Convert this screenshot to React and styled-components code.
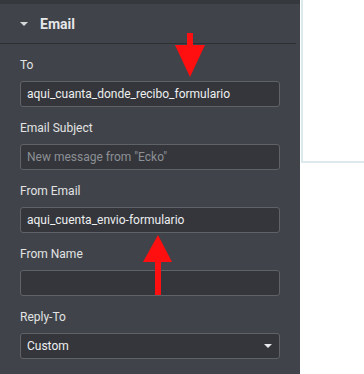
import React from 'react'
import styled, { createGlobalStyle } from 'styled-components'

const GlobalStyle = createGlobalStyle`
  html, body {
    margin: 0;
    padding: 0;
    background: #ffffff;
  }
  body {
    font-family: Roboto, "Liberation Sans", Arial, sans-serif;
  }
`

const Page = styled.div`
  display: flex;
  width: 364px;
  height: 374px;
  overflow: hidden;
`

const Panel = styled.div`
  position: relative;
  width: 300px;
  height: 100%;
  background: #404349;
  display: flex;
  flex-direction: column;
`

const TopStrip = styled.div`
  height: 4px;
  background: #35383d;
`

const SectionHeader = styled.div`
  height: 39px;
  display: flex;
  align-items: center;
  gap: 12px;
  padding-left: 20px;
  margin-right: 4px;
  border-bottom: 1px solid #2d2f33;
  color: #e6e7e9;
  font-size: 14px;
  font-weight: 700;
`

const Caret = styled.span`
  width: 0;
  height: 0;
  border-left: 4px solid transparent;
  border-right: 4px solid transparent;
  border-top: 4px solid #d8d9db;
  margin-top: 1px;
`

const Fields = styled.div`
  display: flex;
  flex-direction: column;
  padding: 13px 20px 0;
`

const Field = styled.div`
  display: flex;
  flex-direction: column;
  margin-bottom: 13px;
`

const Label = styled.div`
  height: 16px;
  line-height: 16px;
  font-size: 12px;
  color: #e2e3e5;
  margin-bottom: 8px;
`

const Input = styled.div`
  box-sizing: border-box;
  height: 26px;
  display: flex;
  align-items: center;
  justify-content: space-between;
  padding: 0 6px;
  background: #34363b;
  border: 1px solid #5f6267;
  border-radius: 3px;
  font-size: 12px;
  color: ${p => (p.$placeholder ? '#8d9095' : '#eeeff0')};
`

const SelectCaret = styled.span`
  width: 0;
  height: 0;
  border-left: 4px solid transparent;
  border-right: 4px solid transparent;
  border-top: 4px solid #e8e9ea;
  margin-right: 1px;
`

const Canvas = styled.div`
  flex: 1;
  background: #ffffff;
`

const CanvasFrame = styled.div`
  height: 161px;
  margin-left: 1px;
  border-left: 2px solid #d9e9ee;
  border-bottom: 2px solid #dde9ed;
`

const Overlay = styled.svg`
  position: absolute;
  top: 0;
  left: 0;
  pointer-events: none;
`

const fields = [
  { label: 'To', value: 'aqui_cuanta_donde_recibo_formulario' },
  { label: 'Email Subject', value: 'New message from "Ecko"', placeholder: true },
  { label: 'From Email', value: 'aqui_cuenta_envio-formulario' },
  { label: 'From Name', value: '' },
  { label: 'Reply-To', value: 'Custom', select: true }
]

const App = () => {
  return (
    <Page>
      <GlobalStyle />
      <Panel>
        <TopStrip />
        <SectionHeader>
          <Caret />
          Email
        </SectionHeader>
        <Fields>
          {fields.map((f, i) => (
            <Field key={i}>
              <Label>{f.label}</Label>
              <Input $placeholder={f.placeholder}>
                <span>{f.value}</span>
                {f.select && <SelectCaret />}
              </Input>
            </Field>
          ))}
        </Fields>
        <Overlay width="300" height="374" viewBox="0 0 300 374">
          <path d="M187 33 H193 V45 H205 L190 77 L175 45 H187 Z" fill="#ff0f0f" />
          <path d="M158 235 L172 262 H161 V295 H155 V262 H143 Z" fill="#ff0f0f" />
        </Overlay>
      </Panel>
      <Canvas>
        <CanvasFrame />
      </Canvas>
    </Page>
  )
}

export default App
